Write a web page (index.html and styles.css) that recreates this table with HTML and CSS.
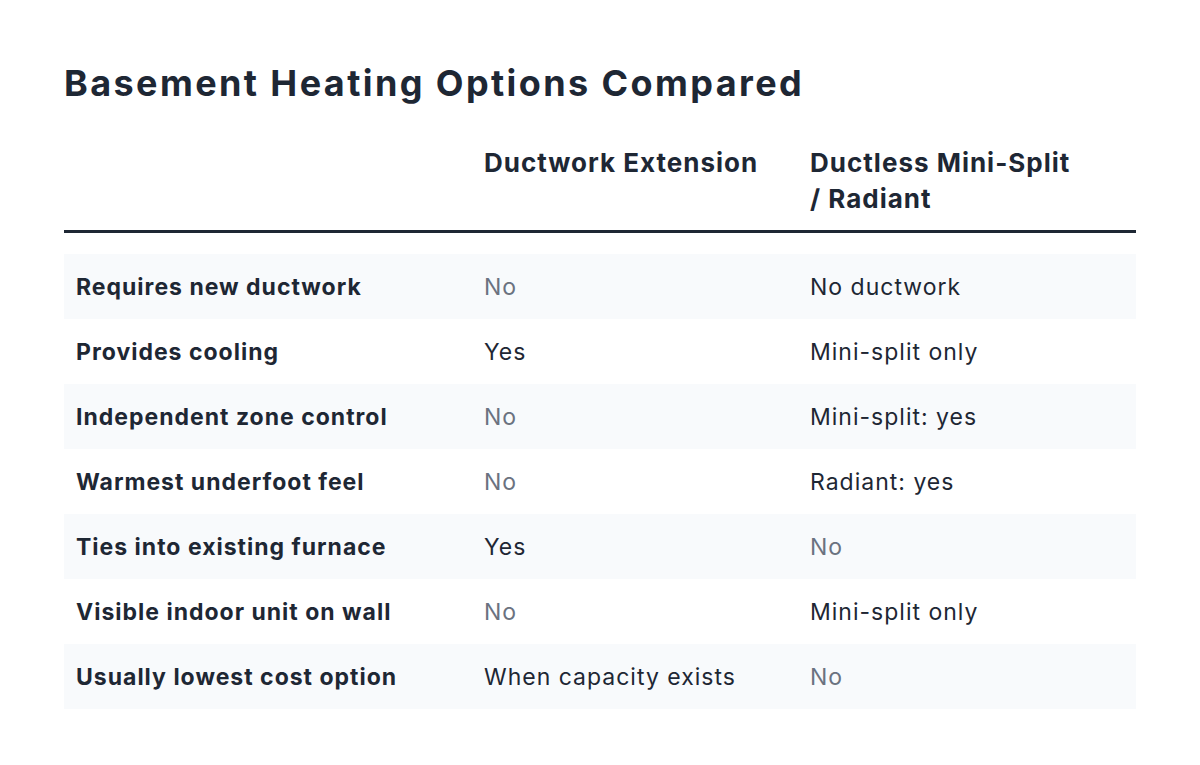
FILE: index.html
```html
<!DOCTYPE html>
<html>
<head>
<meta charset="utf-8">
<link rel="stylesheet" href="styles.css">
</head>
<body>
<main class="page">
  <h1 class="title">Basement Heating Options Compared</h1>
  <div class="compare">
    <div class="head">
      <div class="hcell"></div>
      <div class="hcell">Ductwork Extension</div>
      <div class="hcell">Ductless Mini-Split<br>/ Radiant</div>
    </div>
    <div class="rows">
      <div class="row alt"><div class="label">Requires new ductwork</div><div class="val muted">No</div><div class="val">No ductwork</div></div>
      <div class="row"><div class="label">Provides cooling</div><div class="val">Yes</div><div class="val">Mini-split only</div></div>
      <div class="row alt"><div class="label">Independent zone control</div><div class="val muted">No</div><div class="val">Mini-split: yes</div></div>
      <div class="row"><div class="label">Warmest underfoot feel</div><div class="val muted">No</div><div class="val">Radiant: yes</div></div>
      <div class="row alt"><div class="label">Ties into existing furnace</div><div class="val">Yes</div><div class="val muted">No</div></div>
      <div class="row"><div class="label">Visible indoor unit on wall</div><div class="val muted">No</div><div class="val">Mini-split only</div></div>
      <div class="row alt"><div class="label">Usually lowest cost option</div><div class="val">When capacity exists</div><div class="val muted">No</div></div>
    </div>
  </div>
</main>
</body>
</html>
```
FILE: styles.css
```css
* { box-sizing: border-box; }
html, body { margin: 0; padding: 0; background: #ffffff; }
body {
  font-family: Inter, "Noto Sans", sans-serif;
  color: #1e2734;
}
.page {
  width: 1200px;
  padding: 61px 64px 0 64px;
}
.title {
  margin: 0;
  font-size: 36px;
  line-height: 44px;
  font-weight: 700;
  letter-spacing: 2.4px;
  color: #1e2734;
}
.compare {
  margin-top: 40px;
  width: 1072px;
}
.head, .row {
  display: grid;
  grid-template-columns: 408px 326px 1fr;
}
.head {
  border-bottom: 3px solid #1e2734;
  padding-bottom: 13px;
}
.hcell {
  padding: 0 12px;
  font-size: 26px;
  line-height: 36px;
  font-weight: 700;
  letter-spacing: 1px;
  color: #1e2734;
}
.rows {
  margin-top: 21px;
}
.row {
  height: 65px;
  align-items: center;
}
.row.alt { background: #f8fafc; }
.label, .val {
  padding: 0 12px;
  font-size: 23px;
  line-height: 30px;
  letter-spacing: 1px;
}
.label { font-weight: 700; color: #1e2734; }
.val { font-weight: 400; color: #1e2734; }
.val.muted { color: #6b7280; }
```
